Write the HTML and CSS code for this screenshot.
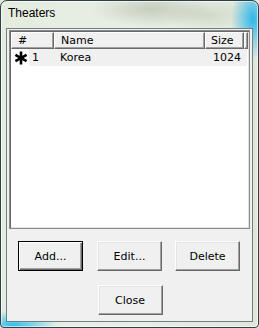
FILE: index.html
```html
<!DOCTYPE html>
<html>
<head>
<meta charset="utf-8">
<link rel="stylesheet" href="styles.css">
</head>
<body>
<div class="window">
  <div class="title">Theaters</div>
  <div class="client">
    <div class="list">
      <div class="header">
        <div class="hcell hc1">#</div>
        <div class="hcell hc2">Name</div>
        <div class="hcell hc3">Size</div>
        <div class="hfill"></div>
      </div>
      <div class="row">
        <div class="icon">
          <svg width="14" height="14" viewBox="0 0 14 14">
            <g stroke="#000" stroke-width="2.6" stroke-linecap="butt">
              <line x1="7" y1="0.5" x2="7" y2="13.5"/>
              <line x1="1.4" y1="3.8" x2="12.6" y2="10.2"/>
              <line x1="1.4" y1="10.2" x2="12.6" y2="3.8"/>
            </g>
          </svg>
        </div>
        <div class="sel">
          <div class="cell c1">1</div>
          <div class="cell c2">Korea</div>
          <div class="cell c3">1024</div>
        </div>
      </div>
    </div>
    <div class="btnrow">
      <div class="btn default b-add">Add...</div>
      <div class="btn b-edit">Edit...</div>
      <div class="btn b-del">Delete</div>
    </div>
    <div class="btnrow2">
      <div class="btn">Close</div>
    </div>
  </div>
</div>
</body>
</html>
```

FILE: styles.css
```css
html, body {
  margin: 0;
  padding: 0;
  width: 259px;
  height: 328px;
  overflow: hidden;
  background: #dfe8dc;
}

.window {
  box-sizing: border-box;
  width: 259px;
  height: 328px;
  border: 1px solid #2f4146;
  border-radius: 7px 7px 4px 4px;
  padding: 0 5px 5px 5px;
  display: flex;
  flex-direction: column;
  background:
    radial-gradient(ellipse 22px 40px at 252px 18px, rgba(40,180,235,0.95), rgba(40,180,235,0) 100%),
    radial-gradient(ellipse 45px 14px at 12px 324px, rgba(40,190,240,0.95), rgba(40,190,240,0) 100%),
    radial-gradient(ellipse 60px 18px at 150px 8px, rgba(170,180,160,0.55), rgba(170,180,160,0) 100%),
    radial-gradient(ellipse 40px 14px at 205px 14px, rgba(190,200,180,0.5), rgba(190,200,180,0) 100%),
    linear-gradient(90deg, #e4ece0 0%, #e8eee4 50%, #dfe7da 100%);
  box-shadow: inset 0 0 0 1px rgba(255,255,255,0.55);
}

.title {
  height: 27px;
  box-sizing: border-box;
  padding: 5px 0 0 2px;
  font-family: "Liberation Sans", Arial, sans-serif;
  font-size: 12px;
  color: #000;
  line-height: 14px;
}

.client {
  flex: 1;
  background: #f0f0f0;
  border: 1px solid #6f7f84;
  display: flex;
  flex-direction: column;
  font-family: "DejaVu Sans", Verdana, sans-serif;
  font-size: 11px;
  color: #000;
}

.list {
  margin: 1px 2px 0 2px;
  height: 199px;
  box-sizing: border-box;
  background: #fff;
  border: 1px solid #8a8a8a;
  box-shadow: inset 1px 1px 0 #696969, inset -1px -1px 0 #e3e3e3;
  padding: 1px;
  display: flex;
  flex-direction: column;
}

.header {
  display: flex;
  height: 17px;
  flex: none;
}

.hcell, .hfill {
  box-sizing: border-box;
  height: 17px;
  background: #f0f0f0;
  border-top: 1px solid #fff;
  border-left: 1px solid #fff;
  border-right: 1px solid #696969;
  border-bottom: 1px solid #696969;
  box-shadow: inset -1px -1px 0 #a0a0a0;
  line-height: 15px;
  padding-left: 6px;
  white-space: nowrap;
}

.hc1 { width: 43px; }
.hc2 { width: 151px; }
.hc3 { width: 39px; padding-left: 5px; }
.hfill { flex: 1; padding: 0; }

.row {
  display: flex;
  height: 17px;
  line-height: 17px;
}

.icon {
  width: 18px;
  display: flex;
  align-items: center;
  justify-content: center;
  padding-left: 2px;
  box-sizing: border-box;
}

.icon svg { display: block; }

.sel {
  flex: 1;
  display: flex;
  background: #f0f0f0;
  margin-right: 1px;
}

.cell { white-space: nowrap; }
.c1 { width: 31px; padding-left: 3px; box-sizing: border-box; }
.c2 { width: 151px; padding-left: 0; box-sizing: border-box; }
.c3 { flex: 1; text-align: right; padding-right: 6px; }

.btnrow {
  display: flex;
  margin-top: 12px;
  padding-left: 11px;
}

.btnrow2 {
  display: flex;
  justify-content: center;
  margin-top: 14px;
  padding-left: 1px;
}

.btn {
  box-sizing: border-box;
  width: 65px;
  height: 30px;
  background: #f0f0f0;
  border-top: 1px solid #fff;
  border-left: 1px solid #fff;
  border-right: 1px solid #696969;
  border-bottom: 1px solid #696969;
  box-shadow: inset -1px -1px 0 #a0a0a0, inset 1px 1px 0 #e3e3e3;
  display: flex;
  align-items: center;
  justify-content: center;
  white-space: nowrap;
}

.btn.default {
  border: 1px solid #000;
  box-shadow: inset 1px 1px 0 #fff, inset -1px -1px 0 #696969, inset -2px -2px 0 #a0a0a0;
}

.b-edit { margin-left: 14px; }
.b-del { margin-left: 13px; }
```
